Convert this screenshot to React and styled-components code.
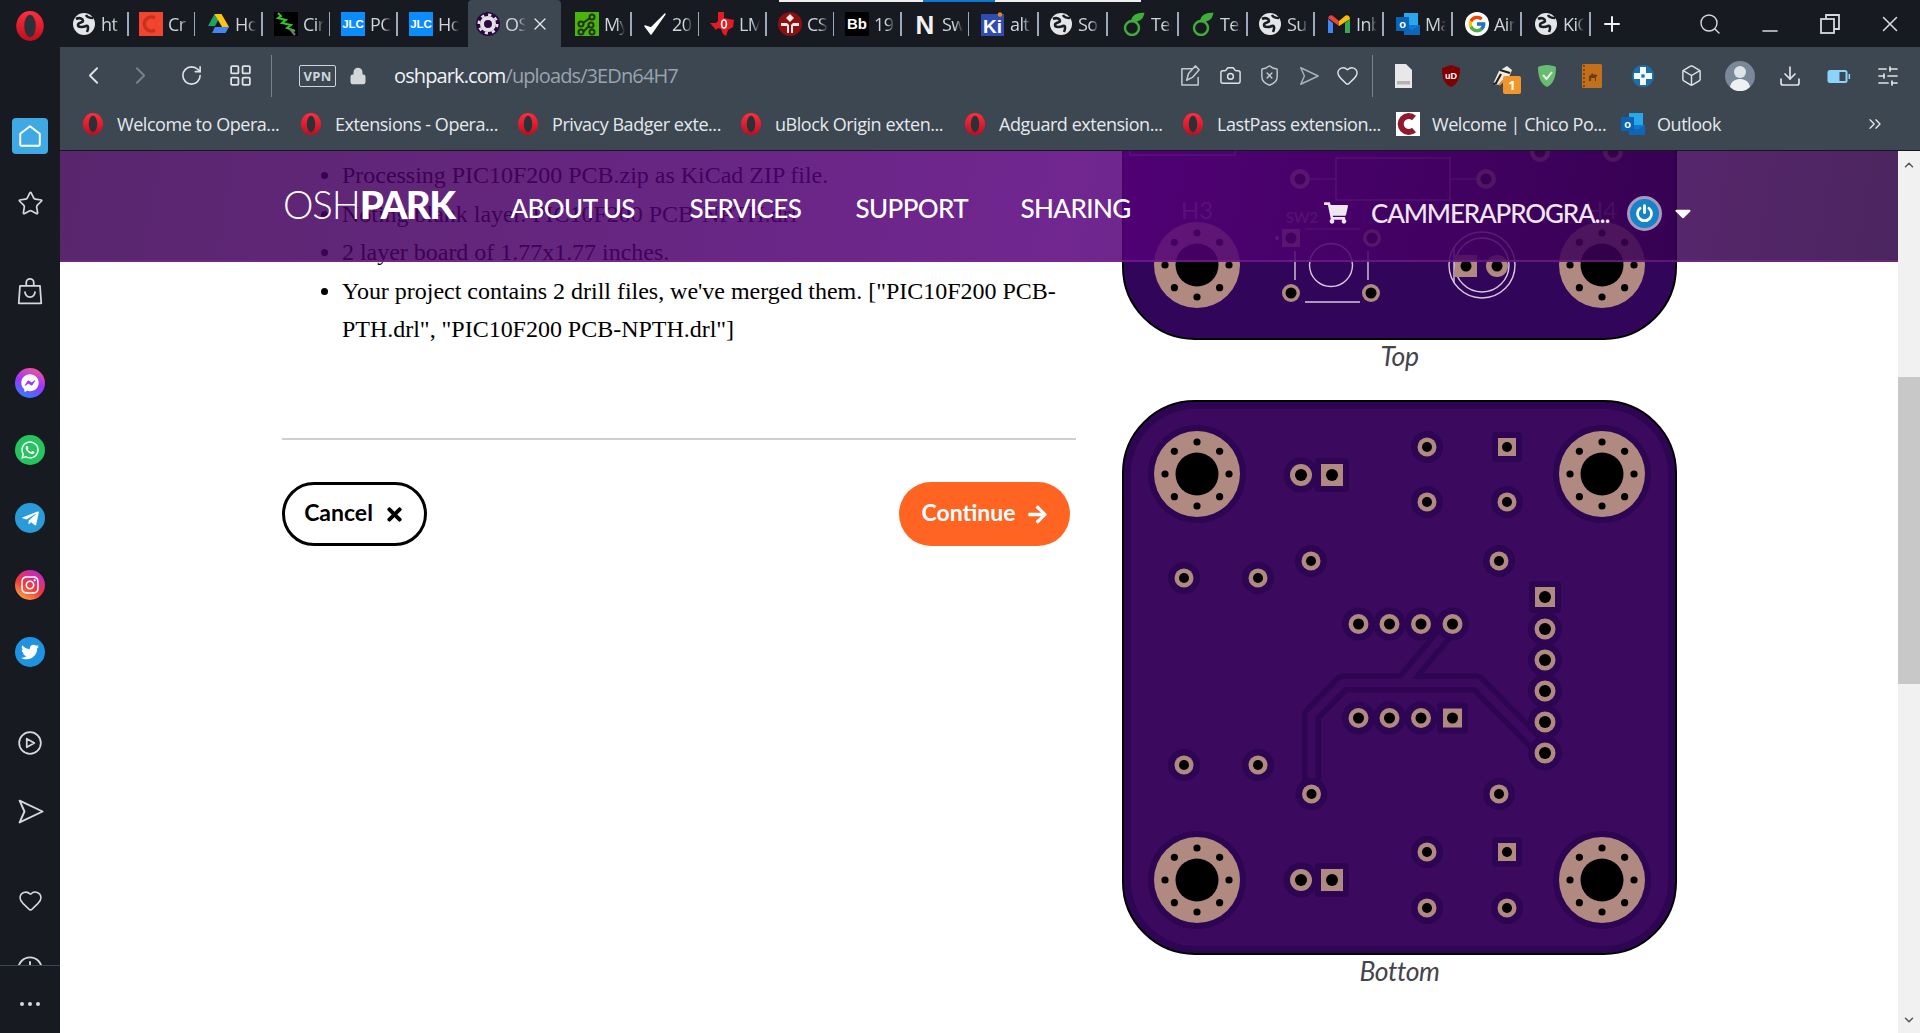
import React from "react";
import styled, { createGlobalStyle } from "styled-components";
import {
  ChevronLeft, ChevronRight, RotateCw, LayoutGrid, Camera, Heart, Box, Download,
  SlidersHorizontal, Search, Minus, X, Plus, Star, ChevronUp, ChevronDown,
  ChevronsRight, ShieldX, Lock
} from "lucide-react";
import {
  FaFacebookMessenger, FaWhatsapp, FaTelegramPlane, FaInstagram, FaTwitter,
  FaTimes, FaArrowRight, FaShoppingCart, FaCaretDown
} from "react-icons/fa";
import { FcGoogle } from "react-icons/fc";

const Global = createGlobalStyle`
  html, body { margin: 0; padding: 0; height: 100%; overflow: hidden; background: #fff; }
  #root { height: 100%; }
  * { box-sizing: border-box; }
`;

const UI = `"Open Sans", "Noto Sans", sans-serif`;
const DISPLAY = `Lato, "Open Sans", sans-serif`;

const Shell = styled.div`
  position: relative;
  display: flex;
  flex-direction: column;
  width: 1920px;
  height: 1033px;
  overflow: hidden;
  background: #171b21;
`;

/* ---------- tab strip ---------- */
const LoadBar = styled.div`
  position: absolute;
  top: 0;
  left: 779px;
  width: 362px;
  height: 2px;
  background: linear-gradient(90deg, #eee 0 144px, #0a78d0 144px 216px, #eee 216px);
`;
const TabStrip = styled.div`
  display: flex;
  align-items: stretch;
  height: 47px;
  flex: none;
`;
const LogoSlot = styled.div`
  width: 60px;
  display: flex;
  align-items: center;
  justify-content: center;
  padding-top: 4px;
`;
const Tab = styled.div`
  width: ${p => p.$w}px;
  display: flex;
  align-items: center;
  padding: 0 0 0 ${p => p.$pl || 12}px;
  gap: 5px;
  color: #dfe3e8;
  background: ${p => (p.$active ? "#3c4752" : "transparent")};
  border-radius: ${p => (p.$active ? "4px 4px 0 0" : "0")};
`;
const TabIcon = styled.span`
  flex: none;
  display: flex;
  width: 24px;
  height: 24px;
`;
const TabText = styled.span`
  flex: none;
  width: ${p => p.$w || 21}px;
  overflow: hidden;
  white-space: nowrap;
  font: 400 18px ${UI};
  letter-spacing: -0.6px;
  color: #cfd4da;
  -webkit-mask-image: linear-gradient(90deg, #000 60%, transparent);
  mask-image: linear-gradient(90deg, #000 60%, transparent);
`;
const TabSep = styled.span`
  margin-left: auto;
  flex: none;
  width: ${p => p.$w || 2}px;
  height: 24px;
  margin-top: 1px;
  background: #9aa9bb;
`;
const TabClose = styled.span`
  display: flex;
  margin-left: -1px;
  color: #e8ebee;
`;
const AddTab = styled.div`
  width: 42px;
  display: flex;
  align-items: center;
  justify-content: center;
  color: #eef0f2;
`;
const WindowControls = styled.div`
  margin-left: auto;
  display: flex;
`;
const WinBtn = styled.div`
  width: 60px;
  display: flex;
  align-items: center;
  justify-content: center;
  color: #d6dade;
`;

/* ---------- body ---------- */
const Body = styled.div`
  flex: 1;
  min-height: 0;
  display: flex;
`;
const Sidebar = styled.aside`
  width: 60px;
  flex: none;
  display: flex;
  flex-direction: column;
  background: #171b21;
`;
const SideList = styled.div`
  height: 918px;
  overflow: hidden;
  display: flex;
  flex-direction: column;
  align-items: center;
`;
const SideSlot = styled.div`
  flex: none;
  width: 36px;
  height: 36px;
  margin-top: ${p => p.$mt}px;
  display: flex;
  align-items: center;
  justify-content: center;
  color: #d5d9dd;
  border-radius: 4px;
  background: ${p => (p.$on ? "#3fa9e4" : "transparent")};
`;
const SideBadge = styled.span`
  width: 30px;
  height: 30px;
  border-radius: 50%;
  display: flex;
  align-items: center;
  justify-content: center;
  color: #fff;
  background: ${p => p.$bg};
`;
const SideFoot = styled.div`
  flex: 1;
  border-top: 1px solid #3c4752;
  display: flex;
  align-items: center;
  justify-content: center;
  gap: 4px;
  padding-top: 9px;
`;
const Dot = styled.i`
  width: 4px;
  height: 4px;
  border-radius: 50%;
  background: #d5d9dd;
`;

const Main = styled.div`
  flex: 1;
  min-width: 0;
  display: flex;
  flex-direction: column;
`;

/* ---------- toolbar ---------- */
const Toolbar = styled.div`
  height: 53px;
  flex: none;
  display: flex;
  align-items: center;
  padding: 4px 6px 0 9px;
  background: #3c4752;
`;
const ToolSlot = styled.div`
  flex: none;
  width: ${p => p.$w}px;
  margin-left: ${p => p.$ml || 0}px;
  display: flex;
  align-items: center;
  justify-content: center;
  position: relative;
  color: ${p => p.$c || "#dfe3e7"};
`;
const ToolSep = styled.div`
  flex: none;
  width: 1px;
  height: 42px;
  margin: 0 ${p => p.$r}px 0 ${p => p.$l}px;
  background: #77828d;
`;
const VpnTag = styled.span`
  flex: none;
  width: 37px;
  height: 22px;
  border: 1px solid #cfd4d9;
  border-radius: 2px;
  display: flex;
  align-items: center;
  justify-content: center;
  font: 700 13px ${UI};
  letter-spacing: 0.3px;
  color: #cfd4d9;
`;
const Url = styled.div`
  margin-left: 27px;
  font: 400 20px ${UI};
  letter-spacing: -0.89px;
  color: #9aa4ae;
  white-space: nowrap;
  & b { font-weight: 400; color: #f1f3f5; }
`;
const RightTools = styled.div`
  margin-left: auto;
  display: flex;
  align-items: center;
`;
const CountBadge = styled.span`
  position: absolute;
  left: 27px;
  top: 12px;
  width: 18px;
  height: 18px;
  border-radius: 2px;
  background: #f0962a;
  color: #fff;
  font: 700 13px/18px ${UI};
  text-align: center;
`;

/* ---------- bookmarks ---------- */
const Bookmarks = styled.div`
  height: 51px;
  flex: none;
  display: flex;
  align-items: center;
  padding: 0 0 3px 22px;
  background: #3c4752;
  border-bottom: 1px solid #14171b;
`;
const Bookmark = styled.div`
  flex: none;
  width: ${p => p.$w}px;
  display: flex;
  align-items: center;
  gap: ${p => p.$g || 13}px;
  font: 400 18px ${UI};
  letter-spacing: -0.45px;
  color: #e6e9ec;
  white-space: nowrap;
`;
const BookMore = styled.div`
  margin-left: auto;
  margin-right: 35px;
  display: flex;
  color: #e6e9ec;
`;

/* ---------- page ---------- */
const Page = styled.div`
  position: relative;
  flex: 1;
  min-height: 0;
  display: flex;
  background: #fff;
  overflow: hidden;
`;
const SiteHeader = styled.header`
  position: absolute;
  top: 0;
  left: 0;
  right: 22px;
  height: 111px;
  display: flex;
  padding-left: 223px;
  color: #fff;
  background: linear-gradient(100deg, rgba(60,0,84,.85), rgba(88,0,125,.85) 55%, rgba(44,0,66,.85));
  border-bottom: 2px solid rgba(125,40,150,.55);
`;
const Logo = styled.div`
  margin-top: 24px;
  font: 300 38.5px/58px ${DISPLAY};
  letter-spacing: -1.1px;
  & b { font-weight: 900; letter-spacing: -1.6px; }
`;
const Nav = styled.nav`
  margin-left: 56px;
  margin-top: 36px;
  display: flex;
  font: 500 26px/42px ${DISPLAY};
  letter-spacing: -0.6px;
`;
const NavLink = styled.a`
  width: ${p => p.$w}px;
  white-space: nowrap;
`;
const UserMenu = styled.div`
  position: absolute;
  left: 1264px;
  top: 41px;
  height: 42px;
  display: flex;
  align-items: center;
  font: 500 26px ${DISPLAY};
  letter-spacing: -1.15px;
  color: #efe6f2;
`;
const UserName = styled.span`
  margin: 0 17px 0 23px;
  white-space: nowrap;
`;
const PowerDot = styled.span`
  width: 35px;
  height: 35px;
  border-radius: 50%;
  background: #1782c5;
  border: 3px solid #a997c2;
  display: flex;
  align-items: center;
  justify-content: center;
`;
const Content = styled.div`
  flex: 1;
  min-width: 0;
  display: flex;
  gap: 46px;
  padding-left: 222px;
`;
const Report = styled.section`
  flex: none;
  width: 794px;
  padding-top: 5px;
`;
const Notes = styled.ul`
  margin: 0;
  padding: 0 10px 0 60px;
  font: 400 24px/38.5px "Liberation Serif", serif;
  letter-spacing: -0.02px;
  color: #000;
`;
const Rule = styled.hr`
  margin: 89px 0 0;
  height: 2px;
  border: 0;
  background: #cfcfcf;
`;
const Actions = styled.div`
  margin-top: 42px;
  padding-right: 6px;
  display: flex;
  justify-content: space-between;
`;
const Pill = styled.button`
  height: 64px;
  width: ${p => p.$w}px;
  border-radius: 32px;
  border: ${p => (p.$primary ? "0" : "3px solid #000")};
  background: ${p => (p.$primary ? "#ff6423" : "#fff")};
  color: ${p => (p.$primary ? "#fff" : "#000")};
  display: flex;
  align-items: center;
  justify-content: center;
  gap: 11px;
  font: 700 23px ${DISPLAY};
  padding: 0 0 3px;
  & svg { flex: none; margin-top: 4px; }
`;
const Boards = styled.section`
  flex: none;
  width: 555px;
  margin-top: -366px;
`;
const Figure = styled.figure`
  margin: 0;
  & > svg { display: block; }
`;
const Caption = styled.figcaption`
  height: 60px;
  text-align: center;
  font: italic 400 26.5px/32px ${DISPLAY};
  letter-spacing: -0.4px;
  color: #44444c;
`;
const Scrollbar = styled.div`
  flex: none;
  width: 22px;
  display: flex;
  flex-direction: column;
  align-items: center;
  background: #f1f1f1;
  color: #555;
`;
const ScrollArrow = styled.div`
  height: 27px;
  flex: none;
  display: flex;
  align-items: center;
  justify-content: center;
`;
const ScrollThumb = styled.div`
  width: 100%;
  height: 307px;
  flex: none;
  margin-top: 199px;
  background: #c8c8c8;
`;
const ScrollRest = styled.div`
  flex: 1;
`;

/* ---------- drawings ---------- */
const Globe = () => (
  <svg viewBox="0 0 24 24" width="24" height="24">
    <circle cx="12" cy="12" r="11" fill="#e4e6e8" />
    <path d="M4 7c4-2 7 0 7 2s-5 1-5 4 6 2 8 1 3 2 1 6M14 3c1 2 3 3 7 3" fill="none" stroke="#1a1e24" strokeWidth="2.6" />
  </svg>
);
const OperaO = ({ s = 22 }) => (
  <svg viewBox="0 0 24 24" width={s} height={s}>
    <defs>
      <linearGradient id="opg" x1="0" y1="0" x2="0" y2="1">
        <stop offset="0" stopColor="#ff2f3c" />
        <stop offset="1" stopColor="#c00d20" />
      </linearGradient>
    </defs>
    <ellipse cx="12" cy="12" rx="11" ry="12" fill="url(#opg)" />
    <ellipse cx="12" cy="12" rx="4.6" ry="9" fill="#2c3038" />
  </svg>
);
const Leaf = () => (
  <svg viewBox="0 0 24 24" width="24" height="24" fill="none" stroke="#3fae3a" strokeWidth="2.4">
    <circle cx="10" cy="16" r="7" />
    <path d="M10 9c1-5 5-7 11-7-1 5-5 7-11 7z" fill="#3fae3a" />
  </svg>
);
const TabGlyph = ({ kind }) => {
  switch (kind) {
    case "globe": return <Globe />;
    case "crc": return (
      <svg viewBox="0 0 24 24" width="24" height="24">
        <rect width="24" height="24" fill="#f2452f" />
        <path d="M16 6a7 7 0 1 0 0 12" fill="none" stroke="#c9301f" strokeWidth="3.4" />
      </svg>
    );
    case "drive": return (
      <svg viewBox="0 0 24 24" width="24" height="24">
        <path d="M8.5 2h7L9 14H2z" fill="#1ea362" />
        <path d="M15.5 2 23 15h-7L8.5 2z" fill="#ffc311" />
        <path d="M6 21 9 15h14l-3.5 6z" fill="#4285f4" />
      </svg>
    );
    case "coil": return (
      <svg viewBox="0 0 24 24" width="24" height="24">
        <rect width="24" height="24" fill="#000" />
        <path d="M4 1l3 3-3 2 8 2-4 3 9 2-4 3 8 3" fill="none" stroke="#35c52a" strokeWidth="2" />
        <path d="M16 17l5 6" stroke="#777" strokeWidth="2" />
      </svg>
    );
    case "jlc": return (
      <svg viewBox="0 0 24 24" width="24" height="24">
        <rect width="24" height="24" fill="#0a8cff" />
        <text x="12" y="16" textAnchor="middle" fontFamily="Liberation Sans" fontWeight="700" fontSize="11.5" fill="#fff">JLC</text>
      </svg>
    );
    case "gear": return (
      <svg viewBox="0 0 24 24" width="24" height="24">
        <circle cx="12" cy="12" r="12" fill="#2a0a3e" />
        <circle cx="12" cy="12" r="6" fill="#2a0a3e" stroke="#e4dfe8" strokeWidth="4" />
        <circle cx="12" cy="12" r="9.2" fill="none" stroke="#e4dfe8" strokeWidth="2.6" strokeDasharray="3.2 4" />
      </svg>
    );
    case "maker": return (
      <svg viewBox="0 0 24 24" width="24" height="24">
        <rect width="24" height="24" fill="#48b50a" />
        <g fill="none" stroke="#24321c" strokeWidth="2">
          <circle cx="17" cy="5" r="2.5" /><circle cx="6" cy="12" r="2.5" /><circle cx="16" cy="13" r="2.5" />
          <circle cx="6" cy="20" r="2.5" /><circle cx="17" cy="20" r="2.5" />
          <path d="M8 11l7-5M8 20l6-6" />
        </g>
      </svg>
    );
    case "check": return (
      <svg viewBox="0 0 24 24" width="24" height="24">
        <path d="M2 14l6 8L22 2 8 16z" fill="#fff" stroke="#fff" strokeWidth="1.4" strokeLinejoin="round" />
      </svg>
    );
    case "ti": return (
      <svg viewBox="0 0 24 24" width="24" height="24">
        <path d="M8 0h6v6l5 1 5 1-1 7-5 3-2 6-3-2-2-5-3-1-2 2-6-7h6l2-2z" fill="#e31b23" />
        <ellipse cx="14" cy="12" rx="2.4" ry="4" fill="none" stroke="#fff" strokeWidth="1.6" />
      </svg>
    );
    case "cs": return (
      <svg viewBox="0 0 24 24" width="24" height="24">
        <circle cx="12" cy="12" r="12" fill="#8d0f12" />
        <path d="M12 2l4 4-4 4-4-4zM3 11h6l2 2v8H9v-7H3zM21 11h-6l-2 2v8h2v-7h6z" fill="#f4e9e9" />
      </svg>
    );
    case "bb": return (
      <svg viewBox="0 0 24 24" width="24" height="24">
        <rect width="24" height="24" fill="#000" />
        <text x="12" y="17" textAnchor="middle" fontFamily="Liberation Sans" fontWeight="700" fontSize="15" fill="#fff">Bb</text>
      </svg>
    );
    case "n": return (
      <svg viewBox="0 0 24 24" width="24" height="24">
        <text x="12" y="22" textAnchor="middle" fontFamily="Liberation Sans" fontWeight="700" fontSize="26" fill="#f1f1f1">N</text>
      </svg>
    );
    case "ki": return (
      <svg viewBox="0 0 24 24" width="24" height="24">
        <rect y="2" width="23" height="22" fill="#314cb0" />
        <text x="11.5" y="21" textAnchor="middle" fontFamily="Liberation Sans" fontWeight="700" fontSize="19" fill="#fff">Ki</text>
        <circle cx="19" cy="2.5" r="2.2" fill="#f4801f" />
      </svg>
    );
    case "leaf": return <Leaf />;
    case "gmail": return (
      <svg viewBox="0 0 24 24" width="24" height="24">
        <path d="M1 21V7l5 4v10z" fill="#4285f4" />
        <path d="M18 21V11l5-4v14z" fill="#34a853" />
        <path d="M1 7c0-3 3-5 5-3l6 5v5L1 6z" fill="#ea4335" />
        <path d="M12 9l6-5c2-2 5 0 5 3l-11 7z" fill="#fbbc04" />
      </svg>
    );
    case "outlook": return <OutlookMark />;
    case "google": return <FcGoogle size={24} style={{ background: "#fff", borderRadius: "50%", padding: 2 }} />;
    default: return null;
  }
};
const OutlookMark = ({ s = 24 }) => (
  <svg viewBox="0 0 24 24" width={s} height={s}>
    <rect x="8" y="1" width="14" height="12" fill="#28a8ea" />
    <path d="M8 13h16v10H8z" fill="#0f78d4" />
    <path d="M8 13l8 5 8-5v10H8z" fill="#14447d" opacity=".35" />
    <rect x="0" y="5" width="13" height="14" fill="#0a64b5" />
    <text x="6.5" y="16" textAnchor="middle" fontFamily="Liberation Sans" fontWeight="700" fontSize="11" fill="#fff">o</text>
  </svg>
);
const Stroke = ({ w = 24, children, sw = 1.6 }) => (
  <svg viewBox="0 0 24 24" width={w} height={w} fill="none" stroke="currentColor" strokeWidth={sw} strokeLinejoin="round" strokeLinecap="round">{children}</svg>
);
const SendIcon = ({ s = 24 }) => <Stroke w={s}><path d="M3 3l19 9-19 9 4-9z" /></Stroke>;
const PinEdit = () => (
  <Stroke w={23}><path d="M14 5H3v17h17v-8M8 17l2-7 7-8 4 4-7 8z" /></Stroke>
);
const UBlock = () => (
  <svg viewBox="0 0 24 24" width="24" height="24">
    <path d="M12 1l9 3c0 10-2 16-9 19C5 20 3 14 3 4z" fill="#800000" />
    <text x="12" y="15" textAnchor="middle" fontFamily="Liberation Sans" fontWeight="700" fontSize="9" fill="#fff">uD</text>
  </svg>
);
const Badger = () => (
  <svg viewBox="0 0 24 24" width="24" height="24">
    <path d="M3 20L9 7l8-5 5 4-3 7-9 8z" fill="#f1ede4" />
    <path d="M6 19l5-9M10 6l10 3M3 20l4-1" stroke="#222" strokeWidth="2.2" />
    <path d="M14 16l-5 5" stroke="#e08a20" strokeWidth="2" />
  </svg>
);
const AdGuard = () => (
  <svg viewBox="0 0 24 24" width="24" height="24">
    <path d="M12 1c4 0 7 1 9 2 0 11-3 17-9 20C6 20 3 14 3 3c2-1 5-2 9-2z" fill="#68bc71" />
    <path d="M8 11l3.5 4L17 8" fill="none" stroke="#e9f6ea" strokeWidth="2" />
  </svg>
);
const CamelBook = () => (
  <svg viewBox="0 0 24 24" width="24" height="26">
    <rect x="2" y="0" width="20" height="24" rx="1.5" fill="#c3701c" />
    <path d="M4 1v22" stroke="#6b3a0d" strokeWidth="1.5" strokeDasharray="2 2" />
    <path d="M9 17v-5l2-1 1-2 2 2 1-1 1 1h2l-2 2v4h-1v-3h-4v3z" fill="#6e3b0e" />
  </svg>
);
const BluePlus = () => (
  <svg viewBox="0 0 24 24" width="24" height="24">
    <circle cx="12" cy="12" r="11" fill="#1d6fa8" />
    <path d="M9 3h6v6h6v6h-6v6H9v-6H3V9h6z" fill="#f2f7fa" />
    <rect x="10.4" y="10.4" width="3.2" height="3.2" fill="#1d6fa8" />
  </svg>
);
const Avatar = () => (
  <svg viewBox="0 0 30 30" width="30" height="30">
    <circle cx="15" cy="15" r="15" fill="#7a8898" />
    <circle cx="15" cy="11" r="6" fill="#dfe4e9" />
    <path d="M5 26c1-6 6-8 10-8s9 2 10 8a14 14 0 0 1-20 0z" fill="#eef1f3" />
  </svg>
);
const Battery = () => (
  <svg viewBox="0 0 24 24" width="25" height="24">
    <rect x="1" y="6" width="20" height="13" rx="2.5" fill="#8cd3fb" />
    <rect x="13" y="8" width="6" height="9" fill="#3c4752" />
    <rect x="22" y="10" width="1.6" height="5" fill="#8cd3fb" />
  </svg>
);
const FileIcon = () => (
  <svg viewBox="0 0 24 24" width="24" height="24">
    <path d="M4 0h11l6 6v18H4z" fill="#e8e8e8" />
    <rect x="6" y="17" width="13" height="3.5" fill="#b3b3b3" />
  </svg>
);
const PlayCircle = () => (
  <Stroke w={26}><circle cx="12" cy="12" r="10" /><path d="M9 8l7 4-7 4z" /></Stroke>
);
const Clock = () => (
  <Stroke w={28}><circle cx="12" cy="12" r="10" /><path d="M12 6v6h5" /></Stroke>
);
const HomeIcon = () => (
  <svg viewBox="0 0 24 24" width="26" height="26" fill="none" stroke="#fff" strokeWidth="1.8" strokeLinejoin="round">
    <path d="M12 3l9 7v10a1 1 0 0 1-1 1H4a1 1 0 0 1-1-1V10z" />
  </svg>
);
const Bag = () => (
  <Stroke w={30} sw={1.4}><path d="M4 7h16l1 14H3zM9 7V4.500a3 3 0 0 1 6 0V7M8 12a4 4 0 0 0 8 0" /></Stroke>
);

/* ---------- PCB ---------- */
const MASK = "#3b0a5e", CLEAR = "#2d0552", COPPER = "#b08a80", SILK = "#d9c8dc", GHOST = "#9f8bb0";

const Mount = ({ x, y, rim }) => (
  <g>
    {rim && <circle cx={x} cy={y} r="49" fill={CLEAR} />}
    <circle cx={x} cy={y} r="43" fill={COPPER} />
    {[0, 45, 90, 135, 180, 225, 270, 315].map(a => (
      <circle key={a} cx={x + 32 * Math.cos(a * Math.PI / 180)} cy={y + 32 * Math.sin(a * Math.PI / 180)} r="3.6" fill="#000" />
    ))}
    <circle cx={x} cy={y} r="21.5" fill="#000" />
  </g>
);
const Pad = ({ x, y, r = 10, d = 5.5, sq, c = 16 }) => (
  <g>
    {c > 0 && (sq
      ? <rect x={x - r - 6} y={y - r - 6} width={2 * r + 12} height={2 * r + 12} rx="4" fill={CLEAR} />
      : <circle cx={x} cy={y} r={c} fill={CLEAR} />)}
    {sq
      ? <rect x={x - r} y={y - r} width={2 * r} height={2 * r} fill={COPPER} />
      : <circle cx={x} cy={y} r={r} fill={COPPER} />}
    <circle cx={x} cy={y} r={d} fill="#000" />
  </g>
);

const BOTTOM_PADS = [
  [179, 75, 11, 6, 0], [210, 75, 11, 6, 1], [305, 47, 9.5, 5, 0], [385, 47, 9, 5, 1],
  [305, 102, 9.5, 5, 0], [385, 102, 9.5, 5, 0], [62, 178, 9.5, 5, 0], [136, 178, 9.5, 5, 0],
  [189, 161, 9.5, 5, 0], [377, 161, 9.5, 5, 0], [423, 197, 10, 6, 1], [423, 229, 10.5, 6, 0],
  [423, 260, 10.5, 6, 0], [423, 291, 10.5, 6, 0], [423, 322, 10.5, 6, 0], [423, 353, 10.5, 6, 0],
  [236.5, 224, 10, 5.5, 0], [267.5, 224, 10, 5.5, 0], [299, 224, 10, 5.5, 0], [330.5, 224, 10, 5.5, 0],
  [236.5, 318, 10, 5.5, 0], [267.5, 318, 10, 5.5, 0], [299, 318, 10, 5.5, 0], [330.5, 318, 9.5, 5.5, 1],
  [62, 365, 9.5, 5, 0], [136, 365, 9.5, 5, 0], [189.5, 394, 9.5, 5, 0], [377, 394, 9.5, 5, 0],
  [305, 452, 9.5, 5, 0], [385, 452, 9, 5, 1], [305, 508, 9.5, 5, 0], [385, 508, 9.5, 5, 0],
  [179, 480, 11, 6, 0], [210, 480, 11, 6, 1]
];
const TRACE_A = "M189.5 394V315L221 283H355L424 353";
const TRACE_B = "M281 283L330.5 224";

const BottomBoard = () => (
  <svg viewBox="0 0 555 555" width="555" height="555">
    <rect x="1" y="1" width="553" height="553" rx="72" fill={CLEAR} stroke="#000" strokeWidth="2" />
    <rect x="9" y="9" width="537" height="537" rx="64" fill={MASK} />
    <g fill="none" strokeLinejoin="round">
      <path d={TRACE_A} stroke={CLEAR} strokeWidth="19" />
      <path d={TRACE_B} stroke={CLEAR} strokeWidth="19" />
      <path d={TRACE_A} stroke={MASK} strokeWidth="8" />
      <path d={TRACE_B} stroke={MASK} strokeWidth="8" />
    </g>
    {BOTTOM_PADS.map(([x, y, r, d, sq]) => (
      <Pad key={`${x}-${y}`} x={x} y={y} r={r} d={d} sq={!!sq} c={r + 6.5} />
    ))}
    <Mount x={75} y={74} rim /><Mount x={480} y={74} rim />
    <Mount x={75} y={480} rim /><Mount x={480} y={480} rim />
  </svg>
);

const TopBoard = () => (
  <svg viewBox="0 0 555 555" width="555" height="555">
    <rect x="1" y="1" width="553" height="553" rx="72" fill="#31055a" stroke="#000" strokeWidth="2" />
    <g fill="none" stroke={GHOST} strokeWidth="1.2">
      <rect x="8" y="300" width="105" height="70" />
      <rect x="214" y="373" width="114" height="42" />
      <path d="M188 394h26M328 394h26M183 444h55M173 466v8" />
    </g>
    <g fill="none" stroke={SILK} strokeWidth="1.4">
      <path d="M183 517h55M173 466v29M246 466v29" />
      <circle cx="209" cy="480" r="21.5" />
      <circle cx="360" cy="480" r="33" />
      <path d="M332 462v36" />
      <circle cx="360" cy="480" r="27" />
    </g>
    <g fontFamily="Lato, sans-serif" fill={GHOST} textAnchor="middle" opacity=".75">
      <text x="75" y="434" fontSize="24">H3</text>
      <text x="479" y="434" fontSize="24">H4</text>
      <text x="180" y="438" fontSize="15" fontWeight="700">SW2</text>
    </g>
    <circle cx="155" cy="453" r="2" fill={GHOST} />
    <Pad x={418} y={367} c={0} /><Pad x={491} y={367} c={0} />
    <Pad x={178} y={394} c={0} /><Pad x={364} y={394} c={0} />
    <Pad x={169} y={453} r={9} sq c={0} /><Pad x={250} y={453} r={9} c={0} />
    <Pad x={169} y={508} r={9} c={0} /><Pad x={249} y={508} r={9} c={0} />
    <Pad x={344} y={481} r={11} sq c={0} /><Pad x={375} y={481} r={11} c={0} />
    <Mount x={75} y={480} /><Mount x={480} y={480} />
  </svg>
);

/* ---------- data ---------- */
const TABS = [
  { k: "globe", t: "ht", w: 67, s: 2 }, { k: "crc", t: "Cr", w: 67, s: 1 }, { k: "drive", t: "Ho", w: 68, s: 2 },
  { k: "coil", t: "Cir", w: 67, s: 1 }, { k: "jlc", t: "PC", w: 68, s: 2 }, { k: "jlc", t: "Ho", w: 71, s: 0 },
  { k: "gear", t: "OS", w: 93, s: 0, active: true, pl: 8 },
  { k: "maker", t: "My", w: 70, s: 2, pl: 14 }, { k: "check", t: "20", w: 67, s: 1 }, { k: "ti", t: "LM", w: 68, s: 2 },
  { k: "cs", t: "CS", w: 67, s: 1 }, { k: "bb", t: "19", w: 68, s: 2 }, { k: "n", t: "Sw", w: 68, s: 1 },
  { k: "ki", t: "alt", w: 70, s: 2 }, { k: "globe", t: "So", w: 69, s: 2, pl: 10 }, { k: "leaf", t: "Ter", w: 69, s: 2, pl: 14 },
  { k: "leaf", t: "Tex", w: 69, s: 2, pl: 14 }, { k: "globe", t: "Su", w: 69, s: 2 }, { k: "gmail", t: "Inb", w: 69, s: 2 },
  { k: "outlook", t: "Ma", w: 69, s: 2 }, { k: "google", t: "Air", w: 69, s: 2 }, { k: "globe", t: "KiC", w: 69, s: 2 }
];
const BOOKMARKS = [
  ["Welcome to Opera...", 218], ["Extensions - Opera...", 217], ["Privacy Badger exte...", 223],
  ["uBlock Origin exten...", 224], ["Adguard extension...", 218], ["LastPass extension...", 214]
];
const NOTES = [
  "Processing PIC10F200 PCB.zip as KiCad ZIP file.",
  "Noting blank layer. PIC10F200 PCB-NPTH.drl",
  "2 layer board of 1.77x1.77 inches.",
  `Your project contains 2 drill files, we've merged them. ["PIC10F200 PCB-PTH.drl", "PIC10F200 PCB-NPTH.drl"]`
];
const NAV = [["ABOUT US", 179], ["SERVICES", 166], ["SUPPORT", 165], ["SHARING", 120]];

export default function App() {
  return (
    <Shell>
      <Global />
      <LoadBar />
      <TabStrip>
        <LogoSlot><OperaO s={30} /></LogoSlot>
        {TABS.map((tab, i) => (
          <Tab key={i} $w={tab.w} $active={tab.active} $pl={tab.pl}>
            <TabIcon><TabGlyph kind={tab.k} /></TabIcon>
            <TabText>{tab.t}</TabText>
            {tab.active && <TabClose><X size={20} strokeWidth={1.5} /></TabClose>}
            {tab.s > 0 && <TabSep $w={tab.s} />}
          </Tab>
        ))}
        <AddTab><Plus size={24} strokeWidth={2} /></AddTab>
        <WindowControls>
          <WinBtn><Search size={24} strokeWidth={1.4} /></WinBtn>
          <WinBtn><Minus size={24} strokeWidth={1.6} style={{ marginTop: 14 }} /></WinBtn>
          <WinBtn>
            <svg viewBox="0 0 22 22" width="22" height="22" fill="none" stroke="currentColor" strokeWidth="1.8">
              <rect x="2" y="6" width="13" height="14" /><path d="M7 6V2h13v14h-5" />
            </svg>
          </WinBtn>
          <WinBtn><X size={26} strokeWidth={1.4} /></WinBtn>
        </WindowControls>
      </TabStrip>
      <Body>
        <Sidebar>
          <SideList>
            <SideSlot $mt={71} $on><HomeIcon /></SideSlot>
            <SideSlot $mt={31}><Star size={27} strokeWidth={1.5} /></SideSlot>
            <SideSlot $mt={53}><Bag /></SideSlot>
            <SideSlot $mt={55}><SideBadge $bg="linear-gradient(200deg,#ff5c87,#a033ff 50%,#1292ff)"><FaFacebookMessenger size={18} /></SideBadge></SideSlot>
            <SideSlot $mt={31}><SideBadge $bg="#25c45f"><FaWhatsapp size={20} /></SideBadge></SideSlot>
            <SideSlot $mt={32}><SideBadge $bg="#2a9bd8"><FaTelegramPlane size={19} /></SideBadge></SideSlot>
            <SideSlot $mt={31}><SideBadge $bg="linear-gradient(30deg,#fdc04a,#f0393c 45%,#c92bb0 80%,#7a3ad0)"><FaInstagram size={20} /></SideBadge></SideSlot>
            <SideSlot $mt={31}><SideBadge $bg="#1d93e2"><FaTwitter size={18} /></SideBadge></SideSlot>
            <SideSlot $mt={55}><PlayCircle /></SideSlot>
            <SideSlot $mt={32}><SendIcon s={29} /></SideSlot>
            <SideSlot $mt={53}><Heart size={25} strokeWidth={1.5} /></SideSlot>
            <SideSlot $mt={33}><Clock /></SideSlot>
          </SideList>
          <SideFoot><Dot /><Dot /><Dot /></SideFoot>
        </Sidebar>
        <Main>
          <Toolbar>
            <ToolSlot $w={48}><ChevronLeft size={29} strokeWidth={1.5} /></ToolSlot>
            <ToolSlot $w={46} $c="#778390"><ChevronRight size={29} strokeWidth={1.5} /></ToolSlot>
            <ToolSlot $w={56}><RotateCw size={23} strokeWidth={1.7} /></ToolSlot>
            <ToolSlot $w={42}><LayoutGrid size={25} strokeWidth={1.7} /></ToolSlot>
            <ToolSep $l={10} $r={27} />
            <VpnTag>VPN</VpnTag>
            <ToolSlot $w={18} $ml={13} $c="#d3d7da"><Lock size={22} fill="currentColor" strokeWidth={2} /></ToolSlot>
            <Url><b>oshpark.com</b>/uploads/3EDn64H7</Url>
            <RightTools>
              <ToolSlot $w={40} $c="#c3c9cf"><PinEdit /></ToolSlot>
              <ToolSlot $w={40}><Camera size={23} strokeWidth={1.5} /></ToolSlot>
              <ToolSlot $w={39} $c="#c3c9cf"><ShieldX size={23} strokeWidth={1.5} /></ToolSlot>
              <ToolSlot $w={39} $c="#a9b0b7"><SendIcon s={22} /></ToolSlot>
              <ToolSlot $w={38}><Heart size={23} strokeWidth={1.5} /></ToolSlot>
              <ToolSep $l={6} $r={7} />
              <ToolSlot $w={46}><FileIcon /></ToolSlot>
              <ToolSlot $w={50}><UBlock /></ToolSlot>
              <ToolSlot $w={52}><Badger /><CountBadge>1</CountBadge></ToolSlot>
              <ToolSlot $w={38}><AdGuard /></ToolSlot>
              <ToolSlot $w={52}><CamelBook /></ToolSlot>
              <ToolSlot $w={50}><BluePlus /></ToolSlot>
              <ToolSlot $w={46}><Box size={23} strokeWidth={1.5} /></ToolSlot>
              <ToolSlot $w={52}><Avatar /></ToolSlot>
              <ToolSlot $w={48}><Download size={24} strokeWidth={1.7} /></ToolSlot>
              <ToolSlot $w={48}><Battery /></ToolSlot>
              <ToolSlot $w={52}><SlidersHorizontal size={24} strokeWidth={1.7} /></ToolSlot>
            </RightTools>
          </Toolbar>
          <Bookmarks>
            {BOOKMARKS.map(([t, w]) => (
              <Bookmark key={t} $w={w}><OperaO /><span>{t}</span></Bookmark>
            ))}
            <Bookmark $w={225} $g={12}>
              <svg viewBox="0 0 24 24" width="24" height="24">
                <rect width="24" height="24" fill="#fff" />
                <path d="M18 6a8 8 0 1 0 0 12" fill="none" stroke="#8f1a2d" strokeWidth="6" />
              </svg>
              <span>Welcome | Chico Po...</span>
            </Bookmark>
            <Bookmark $w={100} $g={12}><OutlookMark s={24} /><span>Outlook</span></Bookmark>
            <BookMore><ChevronsRight size={20} strokeWidth={1.6} /></BookMore>
          </Bookmarks>
          <Page>
            <Content>
              <Report>
                <Notes>
                  {NOTES.map(n => <li key={n}>{n}</li>)}
                </Notes>
                <Rule />
                <Actions>
                  <Pill $w={145}>Cancel <FaTimes size={21} /></Pill>
                  <Pill $w={171} $primary>Continue <FaArrowRight size={21} /></Pill>
                </Actions>
              </Report>
              <Boards>
                <Figure><TopBoard /><Caption>Top</Caption></Figure>
                <Figure><BottomBoard /><Caption>Bottom</Caption></Figure>
              </Boards>
            </Content>
            <Scrollbar>
              <ScrollArrow><ChevronUp size={14} strokeWidth={2.5} /></ScrollArrow>
              <ScrollThumb />
              <ScrollRest />
              <ScrollArrow><ChevronDown size={14} strokeWidth={2.5} /></ScrollArrow>
            </Scrollbar>
            <SiteHeader>
              <Logo>OSH<b>PARK</b></Logo>
              <Nav>
                {NAV.map(([t, w]) => <NavLink key={t} $w={w}>{t}</NavLink>)}
              </Nav>
              <UserMenu>
                <FaShoppingCart size={24} />
                <UserName>CAMMERAPROGRA...</UserName>
                <PowerDot>
                  <svg viewBox="0 0 24 24" width="21" height="21" fill="none" stroke="#fff" strokeWidth="3.2" strokeLinecap="round">
                    <path d="M12 3v8M7 6a8 8 0 1 0 10 0" />
                  </svg>
                </PowerDot>
                <FaCaretDown size={26} style={{ marginLeft: 8 }} color="#fff" />
              </UserMenu>
            </SiteHeader>
          </Page>
        </Main>
      </Body>
    </Shell>
  );
}
